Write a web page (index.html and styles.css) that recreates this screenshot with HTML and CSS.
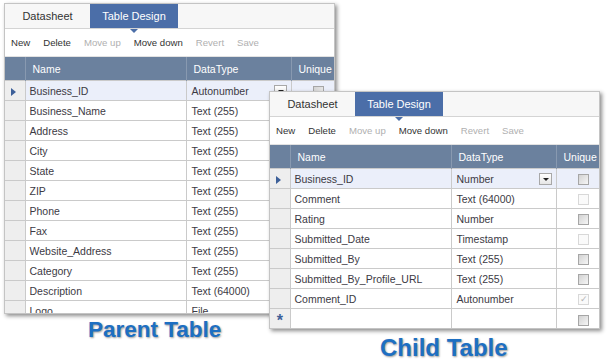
FILE: index.html
```html
<!DOCTYPE html>
<html lang="en">
<head>
    <meta charset="UTF-8">
    <title>Parent and Child Table</title>
    <link rel="stylesheet" href="styles.css">
</head>
<body>
    <div class="stage">
        <div class="window parent">
            <div class="tabs">
                <div class="tab">Datasheet</div>
                <div class="tab active">Table Design</div>
            </div>
            <div class="toolbar">
                <span>New</span>
                <span>Delete</span>
                <span class="off">Move up</span>
                <span>Move down</span>
                <span class="off">Revert</span>
                <span class="off">Save</span>
            </div>
            <table class="grid">
                <colgroup>
                    <col class="c-rh"><col class="c-name"><col class="c-type"><col class="c-uq">
                </colgroup>
                <tr>
                    <th class="rh"></th><th>Name</th><th>DataType</th><th>Unique</th>
                </tr>
                <tr class="current">
                    <td class="rh"><i class="pointer"></i></td><td>Business_ID</td>
                    <td class="type">Autonumber<span class="drop"></span></td><td class="uq"><span class="cb"></span></td>
                </tr>
                <tr><td class="rh"></td><td>Business_Name</td><td class="type">Text (255)</td><td class="uq"></td></tr>
                <tr><td class="rh"></td><td>Address</td><td class="type">Text (255)</td><td class="uq"></td></tr>
                <tr><td class="rh"></td><td>City</td><td class="type">Text (255)</td><td class="uq"></td></tr>
                <tr><td class="rh"></td><td>State</td><td class="type">Text (255)</td><td class="uq"></td></tr>
                <tr><td class="rh"></td><td>ZIP</td><td class="type">Text (255)</td><td class="uq"></td></tr>
                <tr><td class="rh"></td><td>Phone</td><td class="type">Text (255)</td><td class="uq"></td></tr>
                <tr><td class="rh"></td><td>Fax</td><td class="type">Text (255)</td><td class="uq"></td></tr>
                <tr><td class="rh"></td><td>Website_Address</td><td class="type">Text (255)</td><td class="uq"></td></tr>
                <tr><td class="rh"></td><td>Category</td><td class="type">Text (255)</td><td class="uq"></td></tr>
                <tr><td class="rh"></td><td>Description</td><td class="type">Text (64000)</td><td class="uq"></td></tr>
                <tr><td class="rh"></td><td>Logo</td><td class="type">File</td><td class="uq"></td></tr>
            </table>
        </div>

        <div class="label parent-label">Parent Table</div>

        <div class="window child">
            <div class="tabs">
                <div class="tab">Datasheet</div>
                <div class="tab active">Table Design</div>
            </div>
            <div class="toolbar">
                <span>New</span>
                <span>Delete</span>
                <span class="off">Move up</span>
                <span>Move down</span>
                <span class="off">Revert</span>
                <span class="off">Save</span>
            </div>
            <table class="grid">
                <colgroup>
                    <col class="c-rh"><col class="c-name"><col class="c-type"><col class="c-uq">
                </colgroup>
                <tr>
                    <th class="rh"></th><th>Name</th><th>DataType</th><th>Unique</th>
                </tr>
                <tr class="current">
                    <td class="rh"><i class="pointer"></i></td><td>Business_ID</td>
                    <td class="type">Number<span class="drop"></span></td><td class="uq"><span class="cb"></span></td>
                </tr>
                <tr><td class="rh"></td><td>Comment</td><td class="type">Text (64000)</td><td class="uq"><span class="cb off"></span></td></tr>
                <tr><td class="rh"></td><td>Rating</td><td class="type">Number</td><td class="uq"><span class="cb"></span></td></tr>
                <tr><td class="rh"></td><td>Submitted_Date</td><td class="type">Timestamp</td><td class="uq"><span class="cb off"></span></td></tr>
                <tr><td class="rh"></td><td>Submitted_By</td><td class="type">Text (255)</td><td class="uq"><span class="cb"></span></td></tr>
                <tr><td class="rh"></td><td>Submitted_By_Profile_URL</td><td class="type">Text (255)</td><td class="uq"><span class="cb"></span></td></tr>
                <tr><td class="rh"></td><td>Comment_ID</td><td class="type">Autonumber</td><td class="uq"><span class="cb off checked">&#10003;</span></td></tr>
                <tr><td class="rh star">*</td><td></td><td class="type"></td><td class="uq"><span class="cb"></span></td></tr>
            </table>
        </div>

        <div class="label child-label">Child Table</div>
    </div>
</body>
</html>
```

FILE: styles.css
```css
body {
    margin: 0;
    padding: 0;
    background: white;
    font-family: "Liberation Sans", Arial, sans-serif;
}

.stage {
    position: relative;
    width: 607px;
    height: 360px;
    overflow: hidden;
}

/* windows sit on a free canvas and overlap */
.window {
    position: absolute;
    width: 331px;
    background: white;
    border: 1px solid #c4c4c4;
    box-sizing: border-box;
    box-shadow: 2px 2px 4px rgba(0, 0, 0, 0.45);
    overflow: hidden;
    display: flex;
    flex-direction: column;
}

.window.parent {
    left: 4px;
    top: 3px;
    height: 311px;
    z-index: 1;
}

.window.child {
    left: 269px;
    top: 91px;
    height: 238px;
    z-index: 2;
}

.tabs {
    display: flex;
    height: 24px;
    flex-shrink: 0;
    background: #f7f7f7;
    border-bottom: 1px solid #d4d4d4;
}

.tab {
    width: 85px;
    display: flex;
    align-items: center;
    justify-content: center;
    font-size: 11px;
    color: #333;
}

.tab.active {
    position: relative;
    width: 88px;
    background: #4b6ea8;
    color: white;
}

.tab.active::after {
    content: "";
    position: absolute;
    left: 40px;
    bottom: -5px;
    border-left: 4px solid transparent;
    border-right: 4px solid transparent;
    border-top: 4px solid #4b6ea8;
}

.toolbar {
    display: flex;
    align-items: center;
    gap: 13px;
    height: 27px;
    flex-shrink: 0;
    padding-left: 6px;
    font-size: 9.6px;
    color: #333;
    border-bottom: 1px solid #e2e2e2;
}

.toolbar .off {
    color: #b0b0b0;
}

.grid {
    border-collapse: collapse;
    table-layout: fixed;
    width: 331px;
    font-size: 10.5px;
    color: #3c3a44;
}

.c-rh { width: 20px; }
.c-name { width: 161px; }
.c-type { width: 105px; }
.c-uq { width: 45px; }

.grid th {
    height: 23px;
    padding: 0 0 0 7px;
    background: #6b819e;
    color: white;
    font-weight: normal;
    text-align: left;
    border-right: 1px solid #8899b0;
    white-space: nowrap;
    overflow: hidden;
}

.grid th.rh {
    padding: 0;
}

.grid th:last-child {
    border-right: none;
}

.grid td {
    height: 19px;
    padding: 0 0 0 4px;
    border: 1px solid #cacaca;
    white-space: nowrap;
    overflow: hidden;
}

.grid td:first-child {
    border-left: none;
}

.grid td:last-child {
    border-right: none;
}

.grid td.type {
    position: relative;
    padding-left: 5px;
}

.grid td.rh {
    padding: 0;
    background: #eeeeee;
    text-align: center;
}

.grid tr.current td {
    background: #ebeffa;
}

.grid tr.current td.rh {
    background: #eeeeee;
}

.pointer {
    display: inline-block;
    vertical-align: middle;
    margin-left: -2px;
    border-top: 4px solid transparent;
    border-bottom: 4px solid transparent;
    border-left: 5px solid #3d6099;
}

.grid td.star {
    color: #3d6099;
    font-size: 16px;
    font-weight: bold;
    line-height: 10px;
    padding-top: 2px;
}

.drop {
    position: absolute;
    right: 4px;
    top: 4px;
    width: 11px;
    height: 10px;
    border: 1px solid #a8a8a8;
    background: linear-gradient(#ffffff, #e6e6e6);
}

.drop::after {
    content: "";
    position: absolute;
    left: 3px;
    top: 4px;
    border-left: 3px solid transparent;
    border-right: 3px solid transparent;
    border-top: 3px solid #222;
}

.grid td.uq {
    text-align: center;
    padding: 0 0 0 10px;
}

.cb {
    display: inline-block;
    vertical-align: middle;
    width: 9px;
    height: 9px;
    border: 1px solid #a6a6a6;
    background: linear-gradient(135deg, #d2d2d2, #f6f6f6);
    font-size: 9px;
    line-height: 9px;
    text-align: center;
}

.cb.off {
    border-color: #d8d8d8;
    background: #fafafa;
}

.cb.checked {
    color: #b4b4b4;
}

.label {
    position: absolute;
    font-weight: bold;
    line-height: 1;
    color: #1d6fc2;
    text-shadow: 1px 1px 2px rgba(0, 0, 0, 0.4);
}

.parent-label {
    left: 88px;
    top: 319px;
    font-size: 22.5px;
}

.child-label {
    left: 380px;
    top: 336px;
    font-size: 24px;
}
```
